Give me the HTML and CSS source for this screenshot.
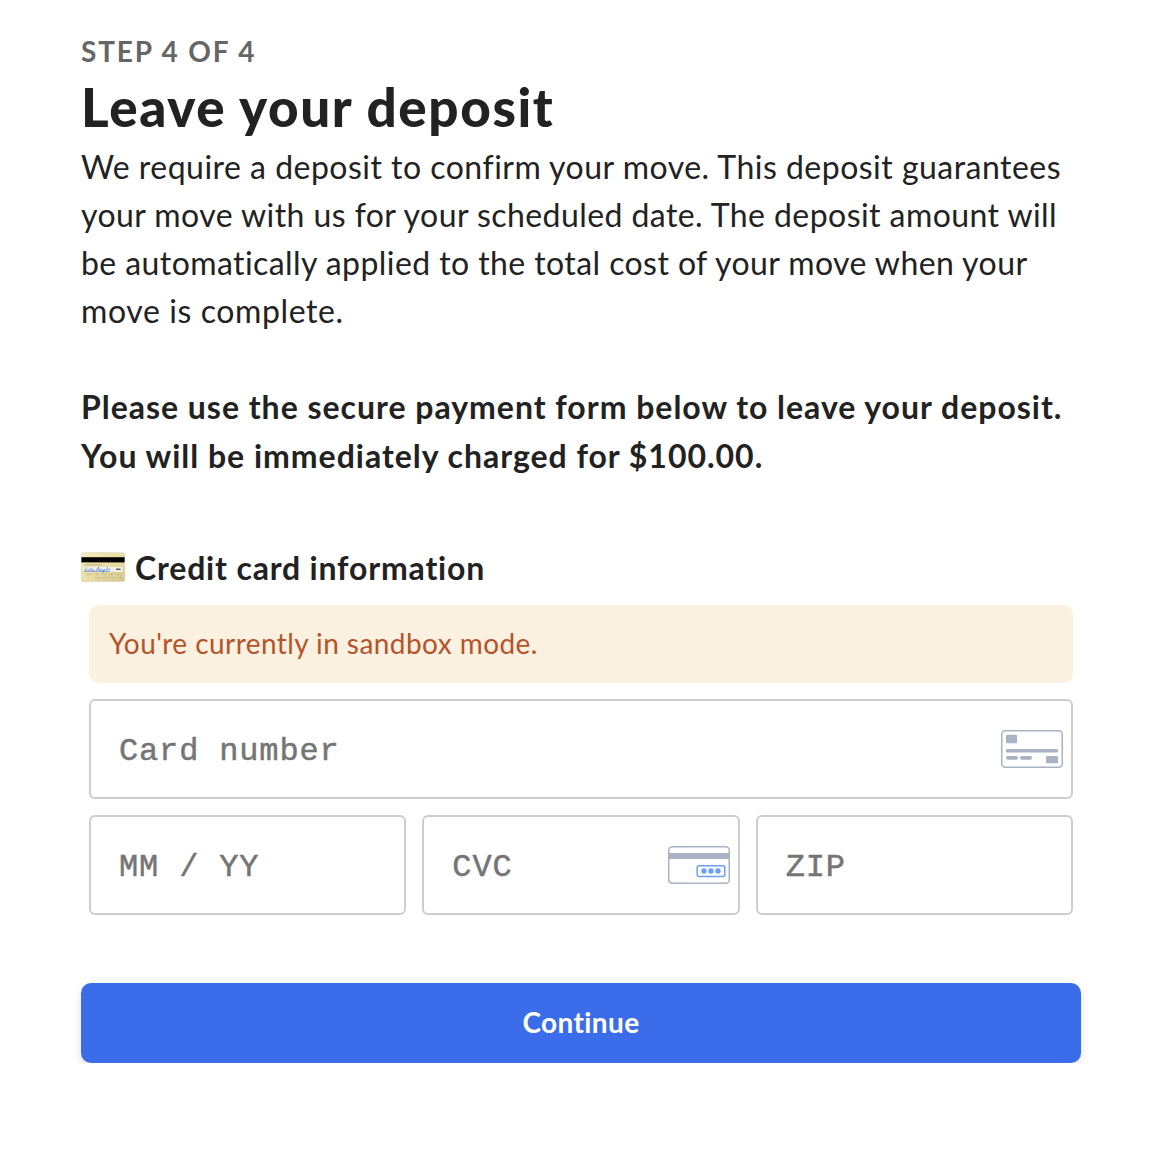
FILE: index.html
```html
<!DOCTYPE html>
<html lang="en">
<head>
  <meta charset="UTF-8">
  <meta name="viewport" content="width=device-width, initial-scale=1.0">
  <title>Leave your deposit</title>
  <link rel="stylesheet" href="styles.css">
</head>
<body>

  <main class="container">
    <div class="step">STEP 4 OF 4</div>
    <h1>Leave your deposit</h1>
    <p class="intro">
      <span class="l1">We require a deposit to confirm your move. This deposit guarantees</span>
      <span class="l2">your move with us for your scheduled date. The deposit amount will</span>
      <span class="l3">be automatically applied to the total cost of your move when your</span>
      <span class="l4">move is complete.</span>
    </p>
    <p class="notice">
      <span>Please use the secure payment form below to leave your deposit.</span>
      <span>You will be immediately charged for $100.00.</span>
    </p>

    <h2>
      <svg class="emoji" viewBox="0 0 44 30">
        <defs>
          <linearGradient id="gold" x1="0" y1="0" x2="1" y2="1">
            <stop offset="0" stop-color="#f4edbd"/>
            <stop offset="0.5" stop-color="#ebe0a4"/>
            <stop offset="1" stop-color="#d5c88c"/>
          </linearGradient>
        </defs>
        <rect x="0.3" y="0.8" width="43.4" height="28.6" rx="1.6" fill="url(#gold)" stroke="#cfc9ad" stroke-width="0.6"/>
        <rect x="0.4" y="5.2" width="43.2" height="5.2" fill="#000"/>
        <path d="M3 12.8h18" stroke="#aaa37c" stroke-width="0.8"/>
        <rect x="2.6" y="15" width="39" height="4.8" fill="#f1f0eb"/>
        <path d="M3.2 19q1.500 .5 2-3.500M6 18.500q1-2 1.700-.5t1.600-.8 1.600.8 1.800-.7M15 19l2.600-3.800.2 3.600M19 17.200v1.500q2-3 2.300 0t2.200-1.500l-1.500 3.600M25 18.600l1.600-3.500M26.500 18.600q2-3.400 2.500-.8M3 19.300h26" fill="none" stroke="#4d7bd0" stroke-width="0.7"/>
        <path d="M35 17.300h4.500" stroke="#555" stroke-width="1.400"/>
        <path d="M5 22.200h36M14 25.800h27" stroke="#c9bf94" stroke-width="2" stroke-dasharray="1.500 .7 2 .6 1 1.800"/>
      </svg>
      <span>Credit card information</span>
    </h2>

    <form class="payment">
      <div class="sandbox">You're currently in sandbox mode.</div>
      <div class="field">
        <input type="text" placeholder="Card number">
        <svg class="card-icon" viewBox="0 0 62 38">
          <rect x="0.75" y="0.75" width="60.5" height="36.500" rx="3.500" fill="#fff" stroke="#a9b4c2" stroke-width="1.500"/>
          <g fill="#a9b4c2">
            <rect x="5" y="4.700" width="11" height="8.600" rx="1"/>
            <rect x="5" y="19" width="52" height="3.400" rx="1.200"/>
            <rect x="5" y="26" width="12" height="3.800" rx="1.700"/>
            <rect x="19" y="26" width="12" height="3.800" rx="1.700"/>
            <rect x="45" y="26" width="12" height="7.300" rx="1"/>
          </g>
        </svg>
      </div>
      <div class="row">
        <div class="field"><input type="text" placeholder="MM / YY"></div>
        <div class="field">
          <input type="text" placeholder="CVC">
          <svg class="card-icon" viewBox="0 0 62 38">
            <rect x="0.75" y="0.75" width="60.5" height="36.500" rx="3.500" fill="#fff" stroke="#a9b4c2" stroke-width="1.500"/>
            <rect x="0.5" y="7" width="61" height="6" fill="#a9b4c2"/>
            <rect x="29.200" y="19.700" width="27.600" height="10.800" rx="2" fill="#fff" stroke="#6c9cf5" stroke-width="1.500"/>
            <g fill="#6c9cf5">
              <circle cx="36" cy="25" r="2.700"/>
              <circle cx="43" cy="25" r="2.700"/>
              <circle cx="50" cy="25" r="2.700"/>
            </g>
          </svg>
        </div>
        <div class="field"><input type="text" placeholder="ZIP"></div>
      </div>
    </form>

    <button class="continue" type="button">Continue</button>
  </main>

</body>
</html>
```
FILE: styles.css
```css
* {
  box-sizing: border-box;
}
body {
  font-family: Avenir, Lato, sans-serif;
  margin: 0;
  background-color: #fff;
  color: #222;
}
.container {
  width: 1000px;
  margin-left: 81px;
  padding-top: 31px;
}
.step {
  font-size: 28px;
  line-height: 40px;
  font-weight: 700;
  color: #666;
  letter-spacing: 1.8px;
}
h1 {
  margin: 0;
  font-size: 53px;
  line-height: 72px;
  font-weight: 900;
  letter-spacing: 1.6px;
}
p {
  margin: 0;
  font-size: 32px;
  line-height: 48px;
  white-space: nowrap;
}
p span {
  display: table;
}
.l1 {
  letter-spacing: 0.48px;
}
.l2 {
  letter-spacing: 0.43px;
}
.l3 {
  letter-spacing: 0.42px;
}
.l4 {
  letter-spacing: 0.6px;
}
.notice {
  margin-top: 47px;
  line-height: 49px;
  font-weight: 700;
  letter-spacing: 0.98px;
}
h2 {
  display: flex;
  align-items: center;
  gap: 10px;
  margin: 64px 0 0;
  font-size: 32px;
  line-height: 48px;
  font-weight: 700;
  letter-spacing: 0.82px;
}
.emoji {
  width: 44px;
  height: 30px;
  margin-bottom: 2px;
}
.payment {
  display: flex;
  flex-direction: column;
  gap: 16px;
  padding: 13px 8px 0;
}
.sandbox {
  height: 78px;
  padding: 0 20px;
  border-radius: 10px;
  background-color: #fbf1e0;
  color: #b5532b;
  font-size: 28px;
  line-height: 76px;
  letter-spacing: 0.43px;
}
.field {
  display: flex;
  align-items: center;
  height: 100px;
  min-width: 0;
  padding: 0 8px 0 28px;
  border: 2px solid #cdcdcd;
  border-radius: 6px;
}
.field input {
  flex: 1;
  min-width: 0;
  padding: 4px 0 0;
  border: 0;
  outline: 0;
  background: none;
  font-family: Courier, "Liberation Mono", monospace;
  font-size: 32px;
  letter-spacing: 0.85px;
  -webkit-text-stroke: 0.5px #757575;
}
.field input::placeholder {
  color: #757575;
}
.card-icon {
  flex-shrink: 0;
  width: 62px;
  height: 38px;
}
.row {
  display: grid;
  grid-template-columns: repeat(3, minmax(0, 1fr));
  gap: 16px;
}
.continue {
  width: 100%;
  height: 80px;
  margin-top: 68px;
  padding: 0 0 2px;
  border: 0;
  border-radius: 10px;
  background-color: #3b6dea;
  color: #fff;
  font-family: inherit;
  font-size: 28px;
  font-weight: 700;
  letter-spacing: 0.4px;
  box-shadow: 0 4px 10px rgba(0,0,0,0.12);
}
```
